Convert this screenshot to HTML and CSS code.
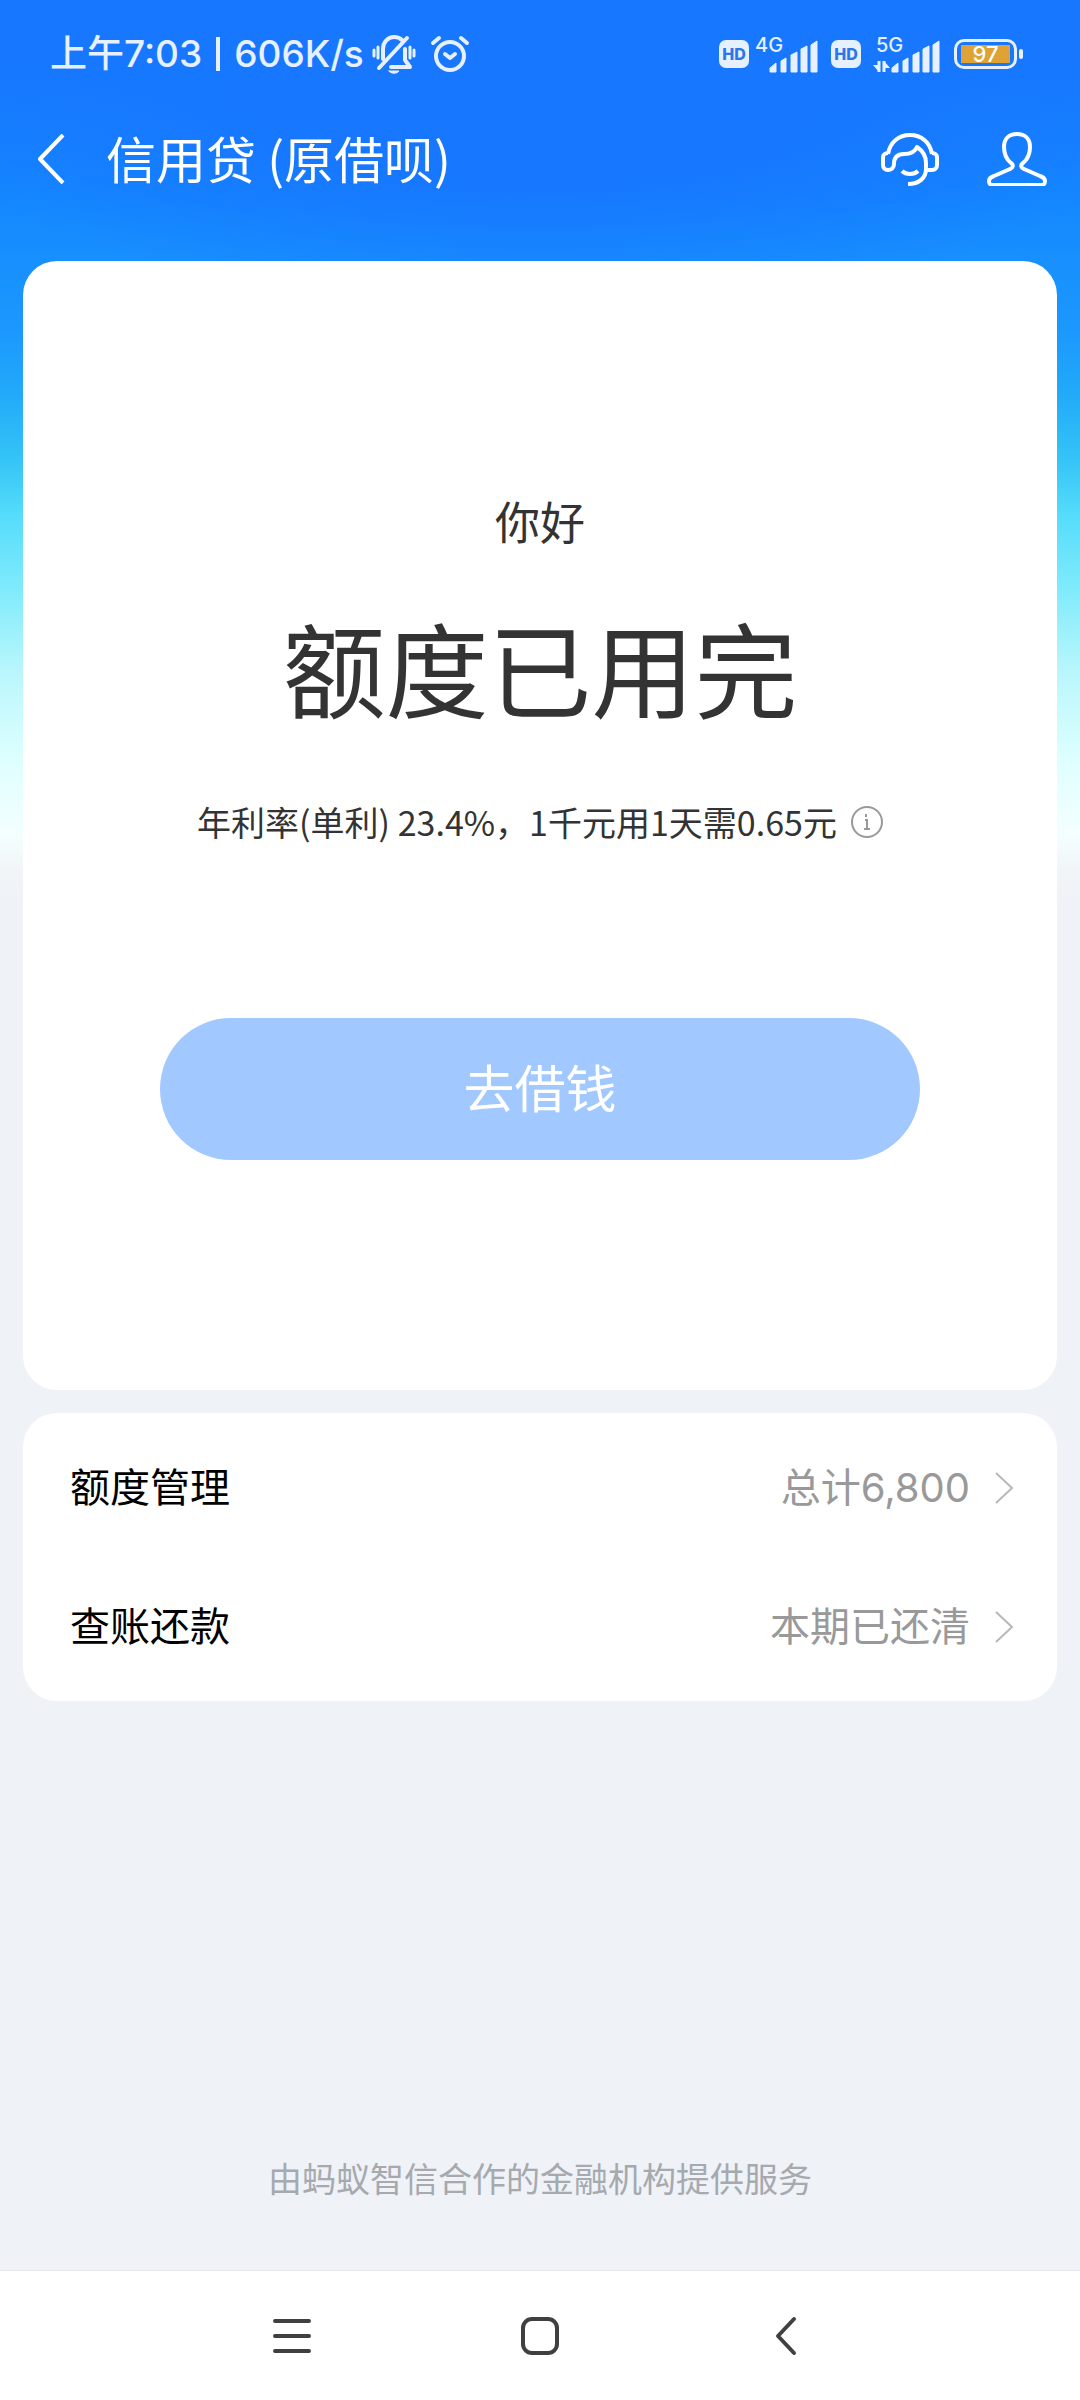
FILE: index.html
```html
<!DOCTYPE html>
<html lang="zh-CN">
<head>
<meta charset="utf-8">
<meta name="viewport" content="width=device-width, initial-scale=1">
<title>信用贷</title>
<link rel="stylesheet" href="styles.css">
</head>
<body>
<div class="screen">
  <div class="status">
    <div class="status-left">
      <span class="status-text">上午7:03</span>
      <span class="status-divider"></span>
      <span class="status-text">606K/s</span>
      <svg class="icon-mute" width="44" height="40" viewBox="0 0 44 40" fill="none" stroke="currentColor" stroke-width="4" stroke-linecap="round" stroke-linejoin="round">
        <path d="M11 25V15C11 8 16 3 22 3c3 0 6 1 8 3"/>
        <path d="M33 15v11l5 7H19"/>
        <path d="M35 4 7 34"/>
        <path d="M17 37h10c-2 3-8 3-10 0z" fill="currentColor" stroke-width="1"/>
        <path d="M2 16v6M6 13v11M38 13v11M42 16v6" stroke-width="3"/>
      </svg>
      <svg class="icon-alarm" width="40" height="40" viewBox="0 0 40 40" fill="none" stroke="currentColor" stroke-width="4" stroke-linecap="round" stroke-linejoin="round">
        <circle cx="20" cy="22" r="14"/>
        <path d="M3 9l6-5M37 9l-6-5M15 20l5 4 5-4"/>
      </svg>
    </div>
    <div class="status-right">
      <span class="hd">HD</span>
      <svg class="signal" width="64" height="40" viewBox="0 0 64 40" fill="currentColor">
        <text x="0" y="18" class="signal-label">4G</text>
        <path d="M15 38v-4l6-5v9zM26 38V27l5-3v14zM36 38V21l6-3v20zM46 38V15l6-3v26zM56 38V11l6-4v31z" stroke="currentColor" stroke-width="1" stroke-linejoin="round"/>
      </svg>
      <span class="hd">HD</span>
      <svg class="signal signal-data" width="68" height="40" viewBox="0 0 68 40" fill="currentColor">
        <text x="4" y="18" class="signal-label">5G</text>
        <path d="M7 27v11M12 38V27" fill="none" stroke="currentColor" stroke-width="3"/>
        <path d="M1 31h6v7zM18 34h-6v-7z"/>
        <path d="M20 38v-4l6-5v9zM31 38V27l5-3v14zM41 38V21l6-3v20zM51 38V15l6-3v26zM61 38V11l6-4v31z" stroke="currentColor" stroke-width="1" stroke-linejoin="round"/>
      </svg>
      <span class="battery"><span class="battery-level">97</span></span>
    </div>
  </div>

  <header class="header">
    <button class="icon-button" type="button" aria-label="返回">
      <svg width="30" height="50" viewBox="0 0 30 50" fill="none" stroke="currentColor" stroke-width="4" stroke-linejoin="round"><path d="M27 1 4 25l23 24"/></svg>
    </button>
    <h1 class="title">信用贷 (原借呗)</h1>
    <button class="icon-button" type="button" aria-label="客服">
      <svg width="58" height="54" viewBox="0 0 58 54" fill="none" stroke="currentColor" stroke-width="4" stroke-linejoin="round">
        <path d="M7 22C9 10 18 3 29 3s20 7 22 19"/>
        <path d="M7 21c-3 0-5 2-5 4v8c0 3 2 5 5 5s6-2 6-6c0-7 4-10 10-10 7 0 11-2 13-7 6 4 9 9 9 16v6c0 9-7 15-18 15"/>
        <path d="M51 21c3 0 5 2 5 4v8c0 3-2 5-5 5h-5"/>
        <path d="M21 39c4 4 12 4 16 0"/>
      </svg>
    </button>
    <button class="icon-button" type="button" aria-label="我的">
      <svg width="60" height="54" viewBox="0 0 60 54" fill="none" stroke="currentColor" stroke-width="4" stroke-linejoin="round">
        <path d="M30 2c-8 0-13 5-13 13 0 7 2 12 7 16 3 2 2 5-1 6L7 44c-3 1-5 3-5 5 0 3 1 4 4 4h48c3 0 4-1 4-4 0-2-2-4-5-5l-16-7c-3-1-4-4-1-6 5-4 7-9 7-16 0-8-5-13-13-13z"/>
      </svg>
    </button>
  </header>

  <main class="content">
    <section class="card quota">
      <p class="greeting">你好</p>
      <h2 class="headline">额度已用完</h2>
      <p class="rate">年利率(单利) 23.4%，1千元用1天需0.65元
        <button class="info" type="button" aria-label="利率说明">
          <svg width="32" height="32" viewBox="0 0 32 32" fill="none" stroke="currentColor" stroke-width="2"><circle cx="16" cy="16" r="15"/><path d="M14 14h2v9M13 23h6M15 8v3"/></svg>
        </button>
      </p>
      <button class="borrow" type="button">去借钱</button>
    </section>

    <nav class="card links">
      <a class="row" href="#quota">
        <span class="row-label">额度管理</span>
        <span class="row-value">总计6,800</span>
        <svg width="20" height="32" viewBox="0 0 20 32" fill="none" stroke="currentColor" stroke-width="2"><path d="M2 1l16 15L2 31"/></svg>
      </a>
      <a class="row" href="#bill">
        <span class="row-label">查账还款</span>
        <span class="row-value">本期已还清</span>
        <svg width="20" height="32" viewBox="0 0 20 32" fill="none" stroke="currentColor" stroke-width="2"><path d="M2 1l16 15L2 31"/></svg>
      </a>
    </nav>

    <p class="provider">由蚂蚁智信合作的金融机构提供服务</p>
  </main>

  <div class="system-nav">
    <button class="icon-button" type="button" aria-label="最近任务">
      <svg width="40" height="40" viewBox="0 0 40 40" fill="none" stroke="currentColor" stroke-width="4" stroke-linecap="round"><path d="M3 5h34M3 20h34M3 35h34"/></svg>
    </button>
    <button class="icon-button" type="button" aria-label="主屏幕">
      <svg width="40" height="40" viewBox="0 0 40 40" fill="none" stroke="currentColor" stroke-width="4"><rect x="3" y="3" width="34" height="34" rx="9"/></svg>
    </button>
    <button class="icon-button" type="button" aria-label="后退">
      <svg width="40" height="40" viewBox="0 0 40 40" fill="none" stroke="currentColor" stroke-width="4" stroke-linecap="round" stroke-linejoin="round"><path d="M26 3 10 20l16 17"/></svg>
    </button>
  </div>
</div>
</body>
</html>
```
FILE: styles.css
```css
* {
  box-sizing: border-box;
}

body {
  margin: 0;
  font-family: Inter, "Noto Sans CJK SC", sans-serif;
  color: #333;
  background: #eff2f7;
}

h1, h2, p {
  margin: 0;
  font-weight: 400;
}

button {
  padding: 0;
  border: 0;
  background: none;
  color: inherit;
  font: inherit;
}

svg {
  display: block;
  flex: none;
}

.screen {
  display: flex;
  flex-direction: column;
  min-height: 100vh;
  background:
    radial-gradient(ellipse 60% 200px at 50% 100px, #1777ff 40%, rgba(23, 119, 255, 0) 100%) no-repeat 0 0 / 100% 300px,
    linear-gradient(#1777ff 0, #1777ff 60px, #1488ff 200px, #1b98fd 330px, #22aaf9 395px, #35c4f6 460px, #55dcfb 515px, #80ebfb 590px, #b8f6fc 670px, #deffff 760px, #f4feff 835px, #f1f5f8 870px, #eff2f7 900px);
}

.status {
  display: flex;
  align-items: center;
  justify-content: space-between;
  height: 108px;
  padding: 0 57px 0 50px;
  color: #e6f0ff;
}

.status-left,
.status-right {
  display: flex;
  align-items: center;
}

.status-text {
  font-size: 37px;
  font-weight: 500;
  line-height: 52px;
}

.status-divider {
  width: 4px;
  height: 34px;
  margin: 0 14px;
  background: currentColor;
}

.icon-mute {
  margin-left: 8px;
}

.icon-alarm {
  margin-left: 14px;
}

.hd {
  width: 30px;
  height: 28px;
  border-radius: 7px;
  background: currentColor;
  font-size: 16px;
  font-weight: 800;
  line-height: 28px;
  text-align: center;
}

.hd::first-line {
  color: #2a78e8;
}

.signal {
  margin: 0 12px 0 6px;
}

.signal-data {
  margin: 0 14px 0 11px;
}

.signal-label {
  font-size: 20px;
  font-weight: 500;
}

.battery {
  display: flex;
  position: relative;
  width: 63px;
  height: 30px;
  padding: 3px 4px;
  margin-right: 6px;
  border: 3px solid currentColor;
  border-radius: 10px;
}

.battery::after {
  content: "";
  position: absolute;
  top: 7px;
  right: -9px;
  width: 4px;
  height: 10px;
  border-radius: 2px;
  background: currentColor;
}

.battery-level {
  flex: 1;
  background: #dfa235;
  color: #fff;
  font-size: 22px;
  font-weight: 500;
  line-height: 18px;
  text-align: center;
}

.header {
  display: flex;
  align-items: center;
  height: 102px;
  padding: 0 33px 0 36px;
  color: #fff;
}

.header .icon-button + .icon-button {
  margin-left: 48px;
}

.title {
  flex: 1;
  margin-left: 40px;
  font-family: "Noto Sans CJK SC", sans-serif;
  font-size: 50px;
  line-height: 68px;
  padding-bottom: 4px;
}

.content {
  flex: 1;
  display: flex;
  flex-direction: column;
  gap: 23px;
  padding: 51px 23px 0;
}

.card {
  border-radius: 34px;
  background: #fff;
}

.quota {
  display: flex;
  flex-direction: column;
  align-items: center;
  padding: 229px 24px 230px;
}

.greeting {
  font-size: 45px;
  line-height: 68px;
}

.headline {
  margin-top: 41px;
  font-size: 103px;
  line-height: 150px;
}

.rate {
  display: flex;
  align-items: center;
  gap: 14px;
  margin-top: 48px;
  font-family: "Noto Sans CJK SC", sans-serif;
  font-size: 34px;
  line-height: 50px;
}

.info {
  color: #999;
}

.borrow {
  width: 77%;
  height: 142px;
  margin-top: 171px;
  padding-bottom: 6px;
  border-radius: 71px;
  background: #a1c8ff;
  color: #fff;
  font-size: 51px;
}

.links {
  padding: 5px 43px 5px 47px;
}

.row {
  display: flex;
  align-items: center;
  height: 139px;
  color: #999;
  font-size: 40px;
  line-height: 58px;
  text-decoration: none;
}

.row-label {
  flex: 1;
  color: #000;
}

.row svg {
  margin-left: 24px;
  color: #b8b8b8;
}

.provider {
  margin-top: auto;
  padding-bottom: 65px;
  color: #a6a9ae;
  font-size: 34px;
  line-height: 50px;
  text-align: center;
}

.system-nav {
  display: grid;
  grid-template-columns: repeat(3, 23%);
  justify-content: center;
  justify-items: center;
  align-items: center;
  height: 130px;
  border-top: 1px solid #e6e6ec;
  background: #fff;
  color: #404040;
}
```
